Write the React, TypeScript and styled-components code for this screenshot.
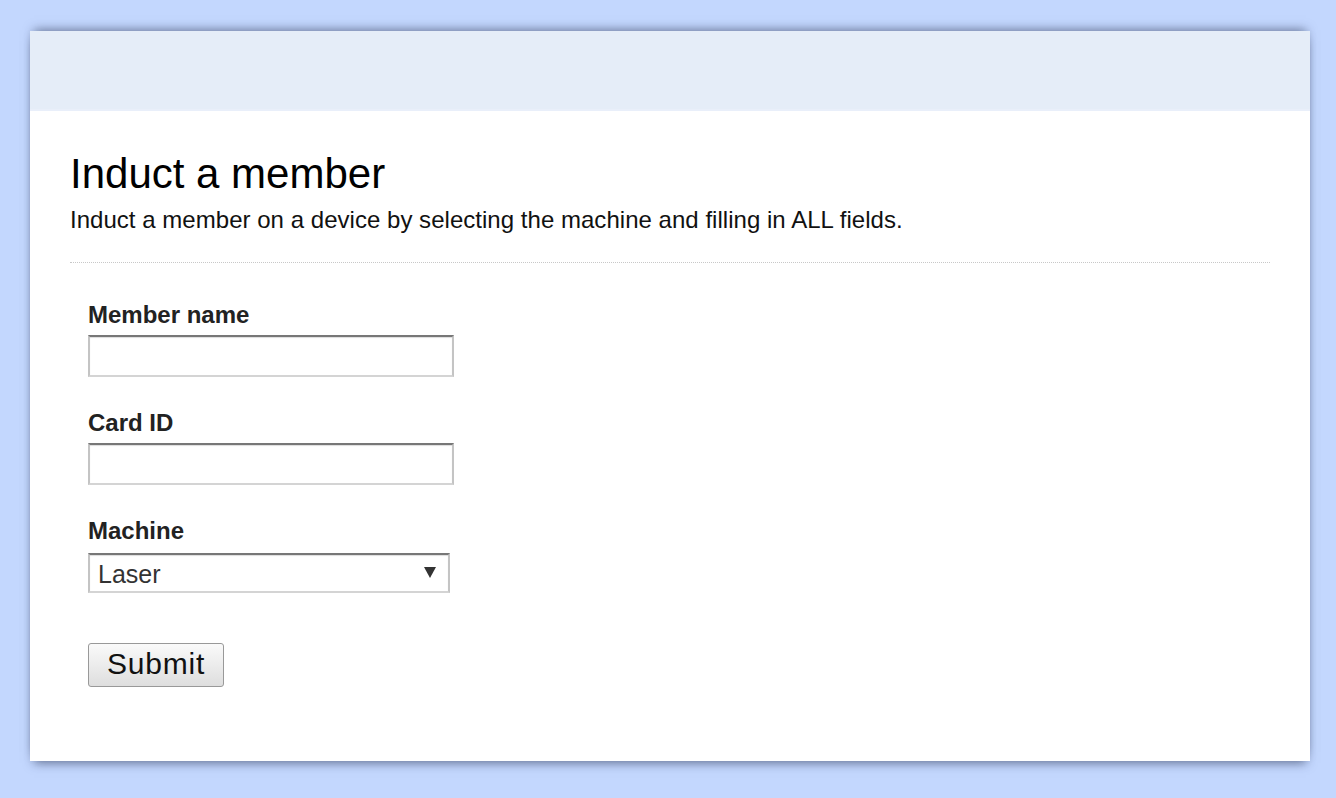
import styled, { createGlobalStyle } from "styled-components";
import { useState } from "react";

const GlobalStyle = createGlobalStyle`
  html, body {
    margin: 0;
    padding: 0;
    background: #c3d7fe;
  }
  body {
    font-family: "Liberation Sans", Arial, sans-serif;
  }
`;

const InductPage = () => {
  const [name, setName] = useState("");
  const [cardId, setCardId] = useState("");
  const [machine, setMachine] = useState("Laser");

  const handleSubmit = (event: React.FormEvent<HTMLFormElement>) => {
    event.preventDefault();
  };

  return (
    <Page>
      <GlobalStyle />
      <Card>
        <Banner />
        <Content>
          <Intro>
            <Title>Induct a member</Title>
            <Lead>
              Induct a member on a device by selecting the machine and filling in ALL fields.
            </Lead>
          </Intro>
          <Form onSubmit={handleSubmit}>
            <Field>
              <Label htmlFor="member-name">Member name</Label>
              <TextInput
                id="member-name"
                type="text"
                value={name}
                onChange={(e) => setName(e.target.value)}
              />
            </Field>
            <Field>
              <Label htmlFor="card-id">Card ID</Label>
              <TextInput
                id="card-id"
                type="text"
                value={cardId}
                onChange={(e) => setCardId(e.target.value)}
              />
            </Field>
            <Field $gap={10}>
              <Label htmlFor="machine">Machine</Label>
              <SelectWrap>
                <Select
                  id="machine"
                  value={machine}
                  onChange={(e) => setMachine(e.target.value)}
                >
                  <option>Laser</option>
                  <option>3D Printer</option>
                  <option>CNC Router</option>
                </Select>
                <Arrow />
              </SelectWrap>
            </Field>
            <SubmitButton type="submit">Submit</SubmitButton>
          </Form>
        </Content>
      </Card>
    </Page>
  );
};

const Page = styled.div`
  padding: 31px 26px 37px 30px;
`;

const Card = styled.div`
  background: #fff;
  box-shadow: 0 -5px 10px -4px rgba(40, 50, 80, 0.6),
    0 6px 10px -4px rgba(40, 50, 80, 0.6);
`;

const Banner = styled.div`
  height: 78px;
  background: #e5edf8;
  border-bottom: 2px solid #e9effa;
`;

const Content = styled.div`
  padding: 40px 40px 74px;
`;

const Intro = styled.div`
  padding-bottom: 29px;
  border-bottom: 1px dotted #c8c8c8;
`;

const Title = styled.h1`
  margin: 0 0 9px;
  font-size: 42px;
  font-weight: normal;
  line-height: 46px;
  color: #000;
`;

const Lead = styled.p`
  margin: 0;
  font-size: 24px;
  line-height: 27px;
  letter-spacing: 0.03px;
  color: #111;
`;

const Form = styled.form`
  display: flex;
  flex-direction: column;
  align-items: flex-start;
  padding: 39px 18px 0;
`;

const Field = styled.div<{ $gap?: number }>`
  display: flex;
  flex-direction: column;
  gap: ${(p) => p.$gap ?? 8}px;
  margin-bottom: 33px;
`;

const Label = styled.label`
  font-size: 24px;
  font-weight: bold;
  line-height: 25px;
  color: #222;
`;

const TextInput = styled.input`
  box-sizing: border-box;
  width: 366px;
  height: 42px;
  padding: 4px 8px;
  font-family: inherit;
  font-size: 22px;
  border-style: solid;
  border-width: 2px;
  border-color: #777 #c4c4c4 #d4d4d4 #c4c4c4;
  box-shadow: inset 0 1px 1px #dcdcdc;
  background: #fff;
  outline: none;
`;

const SelectWrap = styled.div`
  position: relative;
  width: 362px;
`;

const Select = styled.select`
  box-sizing: border-box;
  width: 362px;
  height: 40px;
  padding: 2px 30px 0 8px;
  font-family: inherit;
  font-size: 25px;
  color: #333;
  appearance: none;
  border-radius: 0;
  border-style: solid;
  border-width: 2px;
  border-color: #777 #c4c4c4 #d4d4d4 #c4c4c4;
  box-shadow: inset 0 1px 1px #dcdcdc;
  background: #fff;
  outline: none;
`;

const Arrow = styled.span`
  position: absolute;
  right: 14px;
  top: 14px;
  width: 0;
  height: 0;
  border-left: 6px solid transparent;
  border-right: 6px solid transparent;
  border-top: 11px solid #333;
  pointer-events: none;
`;

const SubmitButton = styled.button`
  margin-top: 17px;
  width: 136px;
  height: 44px;
  padding: 0 0 3px;
  font-family: inherit;
  font-size: 30px;
  letter-spacing: 0.8px;
  color: #111;
  border: 1px solid #999;
  border-radius: 3px;
  background: linear-gradient(#fafafa, #dedede);
  cursor: pointer;
`;

export default InductPage;
